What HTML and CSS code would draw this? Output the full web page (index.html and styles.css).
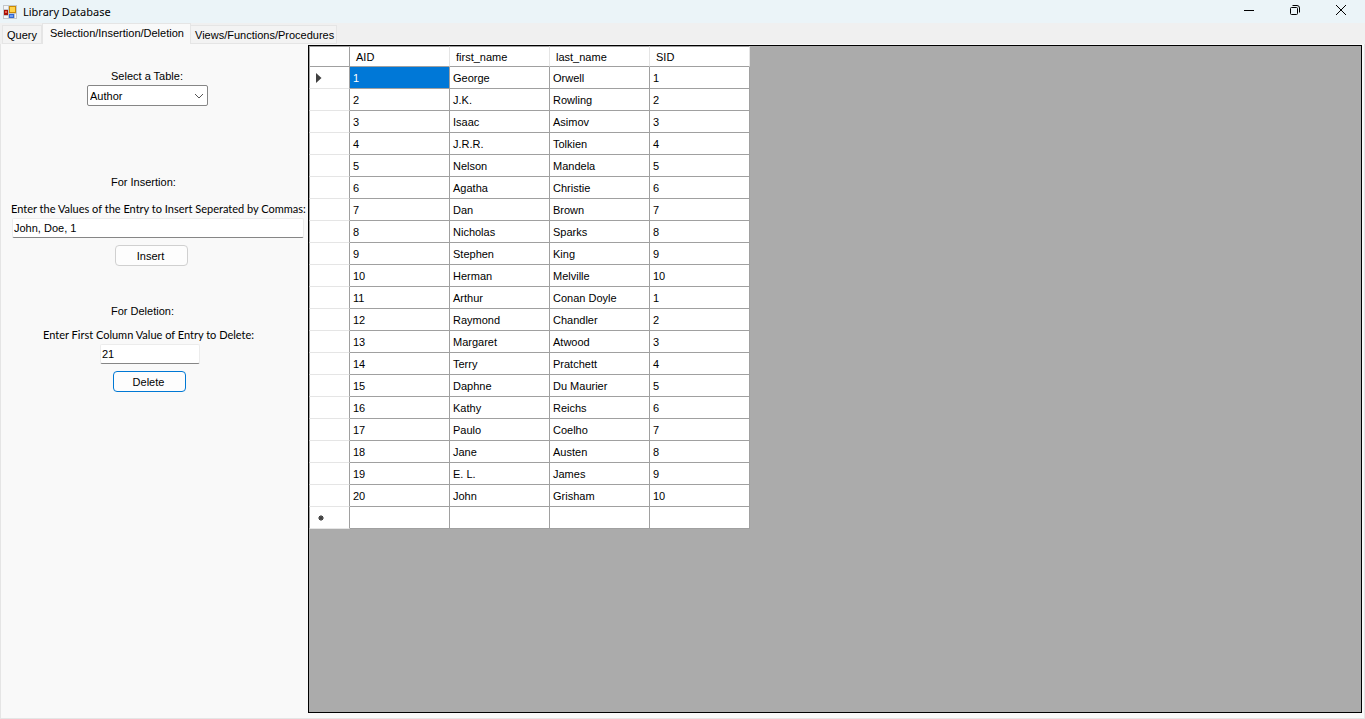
FILE: index.html
```html
<!DOCTYPE html>
<html lang="en">
<head>
<meta charset="utf-8">
<title>Library Database</title>
<link rel="stylesheet" href="styles.css">
</head>
<body>
<div class="window">
  <header class="titlebar">
    <svg class="app-icon" width="14" height="14" viewBox="0 0 14 14" aria-hidden="true">
      <rect width="14" height="14" fill="#c3c7ca"/>
      <rect x="1" y="1" width="4" height="3" fill="#f4f6f7"/>
      <rect x="1" y="11" width="4" height="2" fill="#f4f6f7"/>
      <rect x="12" y="9" width="1" height="4" fill="#f4f6f7"/>
      <rect x="1" y="5" width="4" height="5" fill="#a81208"/>
      <rect x="2" y="6" width="2" height="2" fill="#e8604a"/>
      <rect x="6" y="1" width="7" height="7" fill="#c98a05"/>
      <rect x="7" y="2" width="5" height="5" fill="#ffd34a"/>
      <rect x="6" y="9" width="5" height="4" fill="#3468d0"/>
      <rect x="7" y="10" width="3" height="2" fill="#6f9df2"/>
    </svg>
    <h1 class="title">Library Database</h1>
    <div class="window-controls">
      <button class="window-button" type="button" aria-label="Minimize"><svg width="12" height="12" viewBox="0 0 12 12"><path d="M1 6.5h10" stroke="#000" fill="none"/></svg></button>
      <button class="window-button" type="button" aria-label="Restore"><svg width="12" height="12" viewBox="0 0 12 12" fill="none" stroke="#000"><rect x="1.5" y="3.5" width="7" height="7" rx="1"/><path d="M3.5 1.5H8a2.500 2.500 0 0 1 2.500 2.500V8.500"/></svg></button>
      <button class="window-button" type="button" aria-label="Close"><svg width="12" height="12" viewBox="0 0 12 12"><path d="M1 1l10 10M11 1L1 11" stroke="#000" fill="none"/></svg></button>
    </div>
  </header>

  <div class="tabs" role="tablist">
    <button class="tab tab-query" type="button" role="tab" aria-selected="false">Query</button>
    <button class="tab tab-selected" type="button" role="tab" aria-selected="true">Selection/Insertion/Deletion</button>
    <button class="tab tab-views" type="button" role="tab" aria-selected="false">Views/Functions/Procedures</button>
  </div>

  <main class="page">
    <form class="sidebar">
      <section class="group group-select">
        <label class="label label-table" for="table">Select a Table:</label>
        <div class="combo">
          <select class="combo-field" id="table"><option>Author</option></select>
          <svg class="combo-arrow" width="10" height="6" viewBox="0 0 10 6" aria-hidden="true"><path d="M1 1l4 4 4-4" stroke="#555" fill="none"/></svg>
        </div>
      </section>
      <section class="group group-insert">
        <h2 class="heading">For Insertion:</h2>
        <label class="label label-values" for="values">Enter the Values of the Entry to Insert Seperated by Commas:</label>
        <input class="field field-values" id="values" type="text" value="John, Doe, 1">
        <button class="button button-insert" type="button">Insert</button>
      </section>
      <section class="group group-delete">
        <h2 class="heading">For Deletion:</h2>
        <label class="label label-key" for="key">Enter First Column Value of Entry to Delete:</label>
        <input class="field field-key" id="key" type="text" value="21">
        <button class="button button-delete" type="button">Delete</button>
      </section>
    </form>

    <div class="grid-view">
      <table class="grid">
        <colgroup><col class="col-marker"><col class="col-data"><col class="col-data"><col class="col-data"><col class="col-data"></colgroup>
        <thead>
          <tr><td class="corner"></td><th scope="col">AID</th><th scope="col">first_name</th><th scope="col">last_name</th><th scope="col">SID</th></tr>
        </thead>
        <tbody>
          <tr><td class="marker"><svg class="marker-icon" width="6" height="10" viewBox="0 0 6 10" aria-label="Current row"><path d="M0 0l5.500 5L0 10z" fill="#404040"/></svg></td><td class="current">1</td><td>George</td><td>Orwell</td><td>1</td></tr>
          <tr><td class="marker"></td><td>2</td><td>J.K.</td><td>Rowling</td><td>2</td></tr>
          <tr><td class="marker"></td><td>3</td><td>Isaac</td><td>Asimov</td><td>3</td></tr>
          <tr><td class="marker"></td><td>4</td><td>J.R.R.</td><td>Tolkien</td><td>4</td></tr>
          <tr><td class="marker"></td><td>5</td><td>Nelson</td><td>Mandela</td><td>5</td></tr>
          <tr><td class="marker"></td><td>6</td><td>Agatha</td><td>Christie</td><td>6</td></tr>
          <tr><td class="marker"></td><td>7</td><td>Dan</td><td>Brown</td><td>7</td></tr>
          <tr><td class="marker"></td><td>8</td><td>Nicholas</td><td>Sparks</td><td>8</td></tr>
          <tr><td class="marker"></td><td>9</td><td>Stephen</td><td>King</td><td>9</td></tr>
          <tr><td class="marker"></td><td>10</td><td>Herman</td><td>Melville</td><td>10</td></tr>
          <tr><td class="marker"></td><td>11</td><td>Arthur</td><td>Conan Doyle</td><td>1</td></tr>
          <tr><td class="marker"></td><td>12</td><td>Raymond</td><td>Chandler</td><td>2</td></tr>
          <tr><td class="marker"></td><td>13</td><td>Margaret</td><td>Atwood</td><td>3</td></tr>
          <tr><td class="marker"></td><td>14</td><td>Terry</td><td>Pratchett</td><td>4</td></tr>
          <tr><td class="marker"></td><td>15</td><td>Daphne</td><td>Du Maurier</td><td>5</td></tr>
          <tr><td class="marker"></td><td>16</td><td>Kathy</td><td>Reichs</td><td>6</td></tr>
          <tr><td class="marker"></td><td>17</td><td>Paulo</td><td>Coelho</td><td>7</td></tr>
          <tr><td class="marker"></td><td>18</td><td>Jane</td><td>Austen</td><td>8</td></tr>
          <tr><td class="marker"></td><td>19</td><td>E. L.</td><td>James</td><td>9</td></tr>
          <tr><td class="marker"></td><td>20</td><td>John</td><td>Grisham</td><td>10</td></tr>
          <tr><td class="marker marker-new"><svg class="marker-icon" width="8" height="8" viewBox="0 0 8 8" aria-label="New row"><path d="M4 1v6M1 4h6M2 2l4 4M6 2L2 6" stroke="#404040" fill="none"/><circle cx="4" cy="4" r="2" fill="#404040"/></svg></td><td></td><td></td><td></td><td></td></tr>
        </tbody>
      </table>
    </div>
  </main>
</div>
</body>
</html>
```
FILE: styles.css
```css
* {
  box-sizing: border-box;
}

body {
  margin: 0;
  background: #f0f0f0;
  color: #000;
  font: 11px/14px "Liberation Sans", Arial, sans-serif;
}

button,
input,
select {
  margin: 0;
  color: inherit;
  font: inherit;
}

.window {
  display: flex;
  flex-direction: column;
  min-height: 100vh;
}

/* Title bar */
.titlebar {
  display: flex;
  align-items: center;
  height: 23px;
  padding-left: 3px;
  background: #ebf4f8;
}

.title {
  flex: 1;
  margin: 0 0 0 6px;
  font: 400 11px/16px "Noto Sans", "Open Sans", sans-serif;
}

.window-controls {
  display: flex;
  align-self: flex-start;
  height: 20px;
  padding-right: 1px;
}

.window-button {
  display: flex;
  align-items: center;
  justify-content: center;
  width: 46px;
  padding: 0;
  border: 0;
  background: none;
}

/* Tabs */
.tabs {
  display: flex;
  align-items: flex-end;
  height: 21px;
  padding-left: 2px;
}

.tab {
  height: 19px;
  padding: 0 4px;
  border: 1px solid #e5e5e5;
  border-width: 1px 1px 1px 0;
  background: #f3f3f3;
  text-align: left;
  white-space: nowrap;
}

.tab-query {
  width: 40px;
  border-left-width: 1px;
}

.tab-selected {
  width: 149px;
  height: 21px;
  padding: 0 7px 2px;
  border-width: 1px 1px 0;
  background: #f9f9f9;
}

.tab-views {
  width: 146px;
}

.page {
  display: flex;
  flex: 1;
  padding: 1px 2px 5px 0;
  border: 1px solid #e5e5e5;
  border-top: 0;
  background: #f9f9f9;
}

/* Entry forms */
.sidebar {
  flex: 0 0 307px;
  min-width: 0;
}

.group {
  display: flex;
  flex-direction: column;
  align-items: flex-start;
}

.group-select {
  padding-top: 24px;
}

.group-insert {
  padding-top: 69px;
}

.group-delete {
  padding-top: 38px;
}

.heading {
  margin: 0 0 0 110px;
  font: inherit;
}

.label {
  white-space: nowrap;
}

.label-table {
  margin-left: 110px;
}

.label-values,
.label-key {
  font-family: Lato, "Liberation Sans", sans-serif;
}

.label-values {
  margin: 13px 0 2px 10px;
}

.label-key {
  margin: 10px 0 2px 42px;
}

.combo {
  position: relative;
  width: 121px;
  margin: 2px 0 0 86px;
}

.combo-field {
  display: block;
  width: 100%;
  height: 21px;
  padding: 0 20px 0 2px;
  border: 1px solid #868686;
  border-radius: 2px;
  background: #fff;
  appearance: none;
}

.combo-arrow {
  position: absolute;
  top: 8px;
  right: 4px;
  pointer-events: none;
}

.field {
  height: 20px;
  padding: 0 1px;
  border: 1px solid #ececec;
  border-bottom-color: #868686;
  border-radius: 2px;
  background: #fff;
}

.field-values {
  width: 292px;
  margin-left: 11px;
}

.field-key {
  width: 100px;
  margin-left: 99px;
}

.button {
  width: 73px;
  height: 21px;
  margin-top: 7px;
  padding: 0 2px 0 0;
  border: 1px solid #d0d0d0;
  border-radius: 4px;
  background: #fdfdfd;
}

.button-insert {
  margin-left: 114px;
}

.button-delete {
  margin-left: 112px;
  border-color: #0078d4;
}

/* Data grid */
.grid-view {
  flex: 1;
  border: 1px solid #000;
  background: #ababab;
}

.grid {
  width: 441px;
  border-spacing: 0;
  table-layout: fixed;
}

.col-marker {
  width: 41px;
}

.col-data {
  width: 100px;
}

.grid th,
.grid td {
  height: 22px;
  padding: 0 3px;
  border: solid #a0a0a0;
  border-width: 0 1px 1px 0;
  background: #fff;
  font-weight: 400;
  text-align: left;
}

.grid th,
.grid .corner {
  height: 21px;
  padding: 0 6px;
  border-top: 1px solid #a0a0a0;
}

.grid th {
  border-right-color: #e5e5e5;
}

.grid .corner,
.grid .marker {
  border-left: 1px solid #a0a0a0;
}

.grid .marker {
  padding: 1px 0 0 6px;
  border-bottom-color: #e5e5e5;
}

.grid .marker-new {
  padding-left: 7px;
}

.marker-icon {
  display: block;
}

.grid .current {
  background: #0078d7;
  color: #fff;
}
```
